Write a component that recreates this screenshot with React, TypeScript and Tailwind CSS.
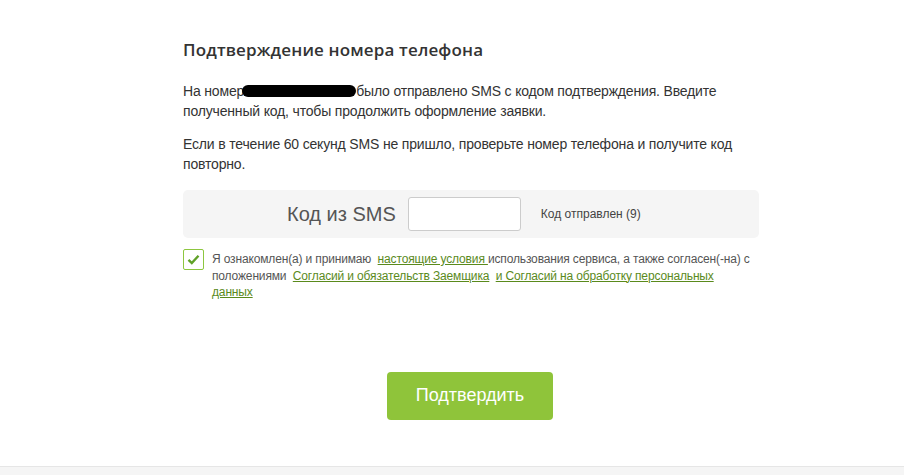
import { useState } from 'react';

export default function App() {
  const [agreed, setAgreed] = useState(true);
  const [code, setCode] = useState('');

  return (
    <div className="min-h-[475px] flex flex-col bg-white font-['Liberation_Sans',Arial,sans-serif] text-[#333]">
      <div className="flex-1">
        <div className="ml-[183px] w-[576px] pt-[38px]">
          <h1 className="font-['Open_Sans',sans-serif] font-semibold text-[17px] leading-[24px] tracking-[0.15px] text-[#333]">
            Подтверждение номера телефона
          </h1>

          <p className="mt-[19px] text-[14px] leading-[20px] tracking-[-0.17px]">
            На номер
            <span className="inline-block align-middle w-[114px] h-[12px] -mt-[2px] -ml-[2px] rounded-full bg-black" />
            было отправлено SMS с кодом подтверждения. Введите полученный код, чтобы продолжить оформление заявки.
          </p>
          <p className="mt-[13px] text-[14px] leading-[20px] tracking-[-0.17px]">
            Если в течение 60 секунд SMS не пришло, проверьте номер телефона и получите код повторно.
          </p>

          <div className="mt-[16px] h-[48px] rounded-[5px] bg-[#f5f5f5] flex items-center pl-[104px]">
            <span className="text-[20px] text-[#555]">Код из SMS</span>
            <input
              value={code}
              onChange={(e) => setCode(e.target.value)}
              className="ml-[12px] w-[113px] h-[34px] rounded-[3px] border border-[#ccc] bg-white px-2 text-[16px] outline-none"
            />
            <span className="ml-[20px] text-[12px] text-[#444]">Код отправлен (9)</span>
          </div>

          <div className="mt-[11px] flex items-start gap-[8px]">
            <button
              onClick={() => setAgreed(!agreed)}
              className="shrink-0 w-[21px] h-[21px] rounded-[2px] border border-[#8dc63f] bg-white flex items-center justify-center"
            >
              {agreed && (
                <svg width="13" height="11" viewBox="0 0 13 11">
                  <path d="M1.5 5.8 L4.8 9 L11.5 1.8" fill="none" stroke="#5fa127" strokeWidth="2.4" />
                </svg>
              )}
            </button>
            <p className="mt-[2px] w-[541px] text-[12px] leading-[16.5px] tracking-[-0.15px] text-[#555]">
              Я ознакомлен(а) и принимаю{'\u00a0 '}
              <a href="#" className="text-[#5a8a1c] underline">настоящие условия </a>
              использования сервиса, а также согласен(-на) с положениями{'\u00a0 '}
              <a href="#" className="text-[#5a8a1c] underline">Согласий и обязательств Заемщика</a>
              {'\u00a0 '}
              <a href="#" className="text-[#5a8a1c] underline">и Согласий на обработку персональных данных</a>
            </p>
          </div>

          <div className="mt-[71px] flex justify-center">
            <button className="ml-[-2px] w-[166px] h-[48px] rounded-[4px] bg-[#8fc43a] text-white text-[18px]">
              Подтвердить
            </button>
          </div>
        </div>
      </div>

      <div className="h-[9px] border-t border-[#e6e6e6] bg-[#f5f5f5]" />
    </div>
  );
}
